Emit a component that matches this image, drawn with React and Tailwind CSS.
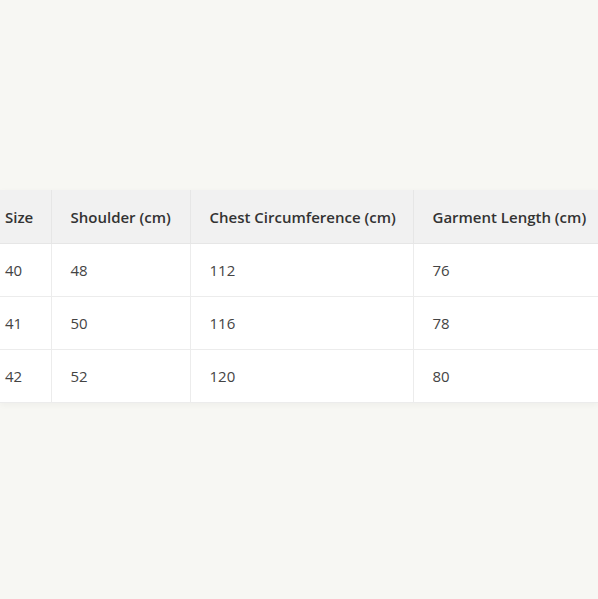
export default function App() {
  const rows = [
    { size: "40", shoulder: "48", chest: "112", length: "76" },
    { size: "41", shoulder: "50", chest: "116", length: "78" },
    { size: "42", shoulder: "52", chest: "120", length: "80" },
  ];

  return (
    <div
      className="w-[598px] h-[599px] bg-[#f7f7f3] pt-[190px] overflow-hidden"
      style={{ fontFamily: '"Open Sans", "Noto Sans", sans-serif' }}
    >
      <div className="overflow-hidden shadow-[0_2px_6px_rgba(0,0,0,0.04)]">
        <table className="-ml-[14px] w-[620px] min-w-[620px] table-fixed border-collapse bg-white text-[15px] whitespace-nowrap">
          <colgroup>
            <col className="w-[65px]" />
            <col className="w-[139px]" />
            <col className="w-[223px]" />
            <col className="w-[193px]" />
          </colgroup>
          <thead>
            <tr className="bg-[#f1f1f1] text-[#333] text-left leading-[21px]">
              <th className="pt-[17px] pb-[15px] pl-[19px] font-semibold border-b border-r border-[#e6e6e6]">
                Size
              </th>
              <th className="pt-[17px] pb-[15px] px-[19px] font-semibold border-b border-r border-[#e6e6e6]">
                Shoulder (cm)
              </th>
              <th className="pt-[17px] pb-[15px] px-[19px] font-semibold border-b border-r border-[#e6e6e6]">
                Chest Circumference (cm)
              </th>
              <th className="pt-[17px] pb-[15px] px-[19px] font-semibold border-b border-[#e6e6e6]">
                Garment Length (cm)
              </th>
            </tr>
          </thead>
          <tbody className="text-[#444] leading-[20px]">
            {rows.map((r) => (
              <tr key={r.size}>
                <td className="py-4 pl-[19px] border-b border-r border-[#ececec]">{r.size}</td>
                <td className="py-4 px-[19px] border-b border-r border-[#ececec]">{r.shoulder}</td>
                <td className="py-4 px-[19px] border-b border-r border-[#ececec]">{r.chest}</td>
                <td className="py-4 px-[19px] border-b border-[#ececec]">{r.length}</td>
              </tr>
            ))}
          </tbody>
        </table>
      </div>
    </div>
  );
}
